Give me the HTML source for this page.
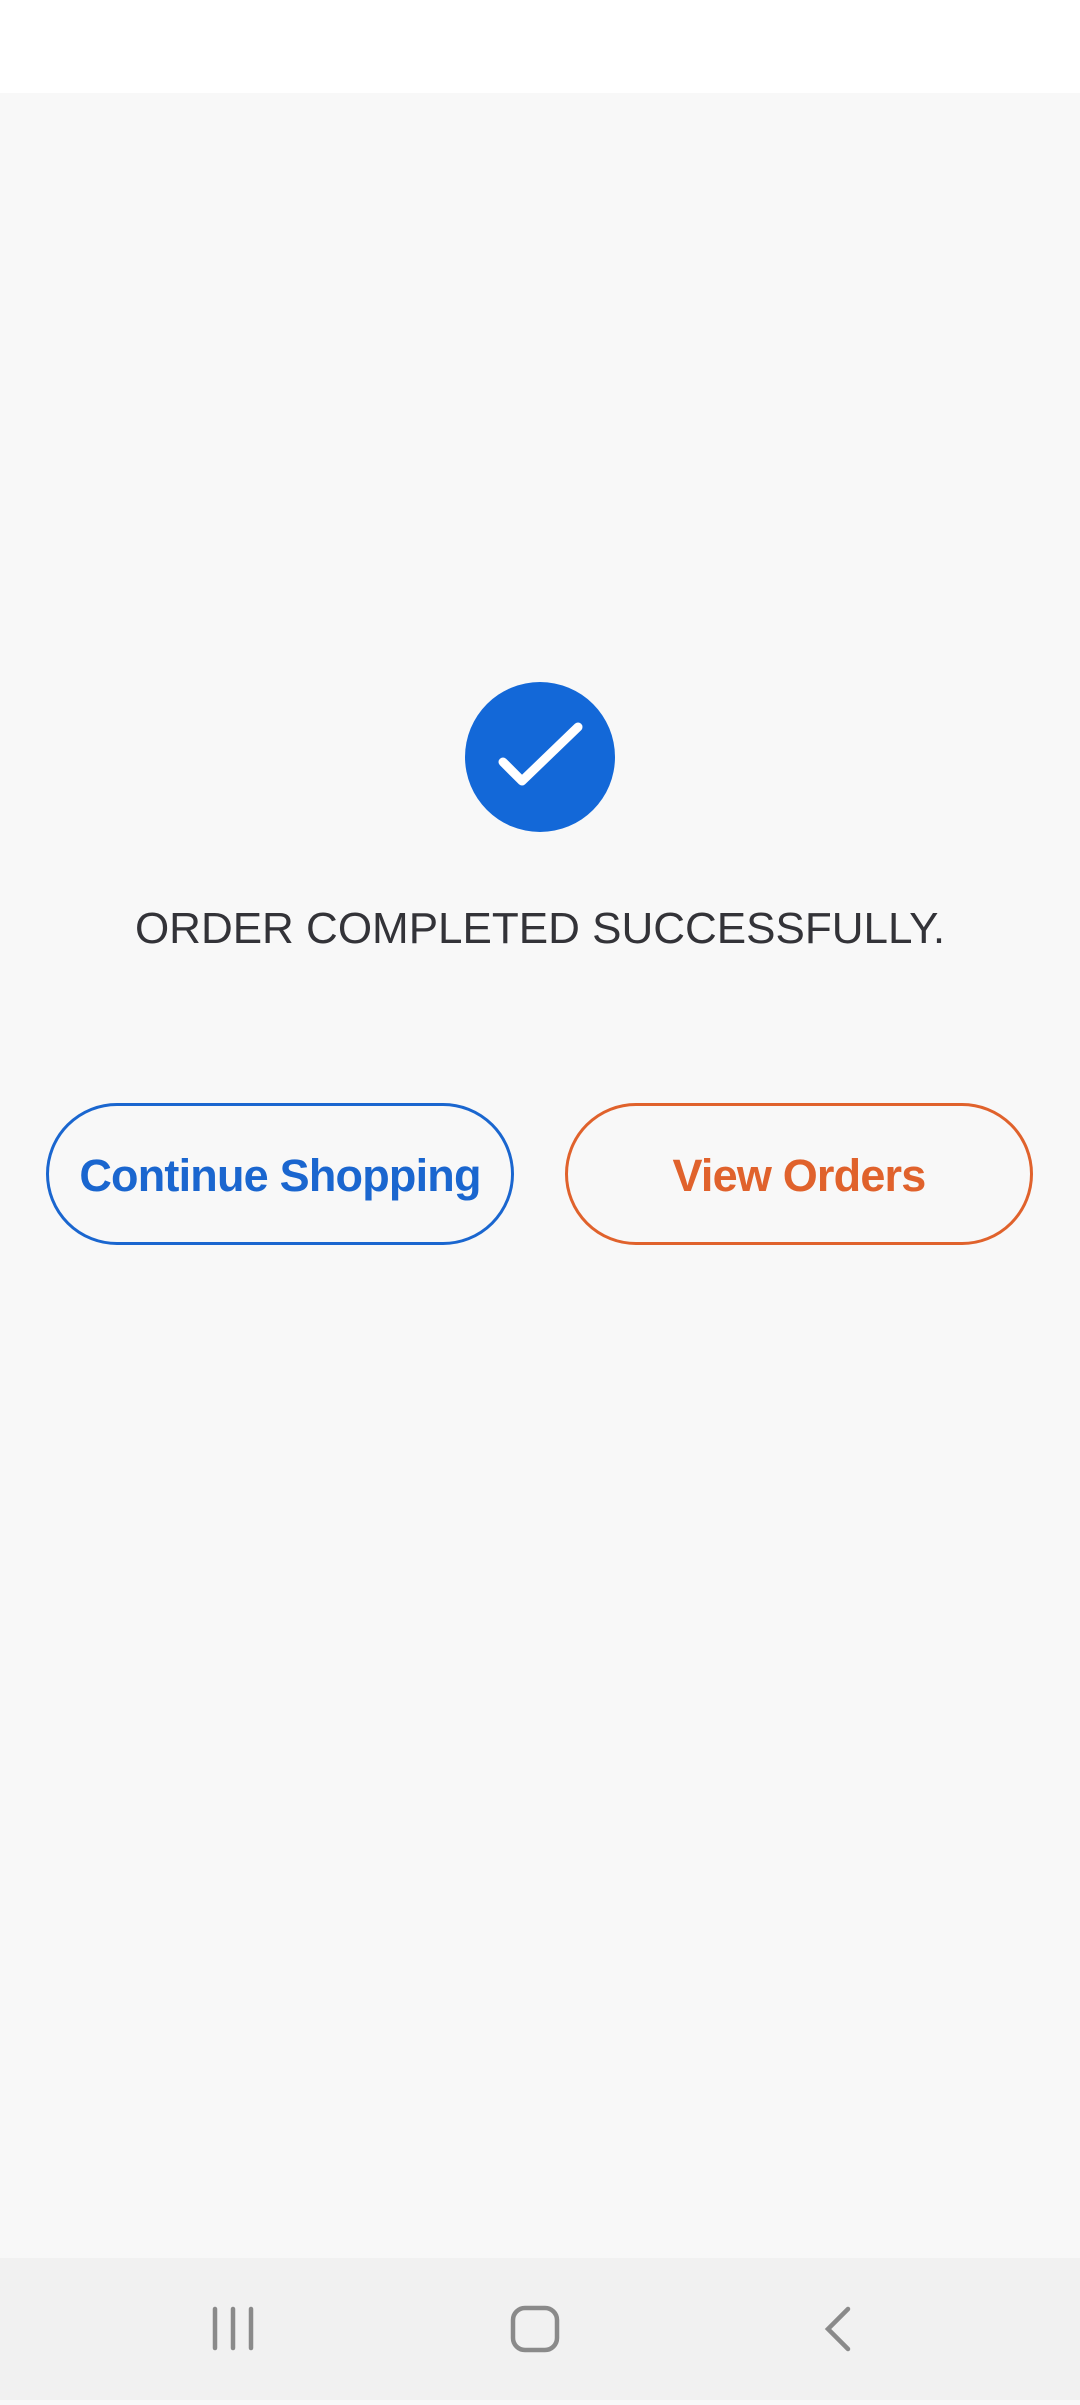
<!DOCTYPE html>
<html><head><meta charset="utf-8"><style>
body{margin:0;width:1080px;height:2400px;background:#f8f8f8;font-family:"Liberation Sans",sans-serif;position:relative;overflow:hidden}
.top{position:absolute;left:0;top:0;width:1080px;height:93px;background:#fff}
.nav{position:absolute;left:0;top:2258px;width:1080px;height:142px;background:#f1f1f1}
.msg{position:absolute;top:904px;left:0;width:1080px;text-align:center;font-size:44px;color:#333338}
.btn{position:absolute;top:1103px;height:142px;width:468px;border-radius:72px;border:3px solid;box-sizing:border-box;display:flex;align-items:center;justify-content:center;font-size:45px;font-weight:bold;letter-spacing:-0.8px;padding-top:4px}
</style></head><body>
<div class="top"></div>
<svg style="position:absolute;left:465px;top:682px" width="150" height="150" viewBox="0 0 150 150">
<circle cx="75" cy="75" r="75" fill="#1368d8"/>
<path d="M38 80 L57 99 L113 45" fill="none" stroke="#fff" stroke-width="9" stroke-linecap="round" stroke-linejoin="round"/>
</svg>
<div class="msg">ORDER COMPLETED SUCCESSFULLY.</div>
<div class="btn" style="left:46px;border-color:#1a66cf;color:#1a66cf">Continue Shopping</div>
<div class="btn" style="left:565px;border-color:#e0622c;color:#e0622c">View Orders</div>
<div class="nav">
<svg width="1080" height="142" viewBox="0 5 1080 142">
<g stroke="#8a8a8a" stroke-width="4.5" stroke-linecap="round" fill="none">
<line x1="215" y1="56" x2="215" y2="95"/><line x1="233" y1="56" x2="233" y2="95"/><line x1="251" y1="56" x2="251" y2="95"/>
<rect x="513" y="55" width="44" height="42" rx="12"/>
<path d="M848 56 L828 76 L848 96"/>
</g></svg>
</div>
</body></html>
